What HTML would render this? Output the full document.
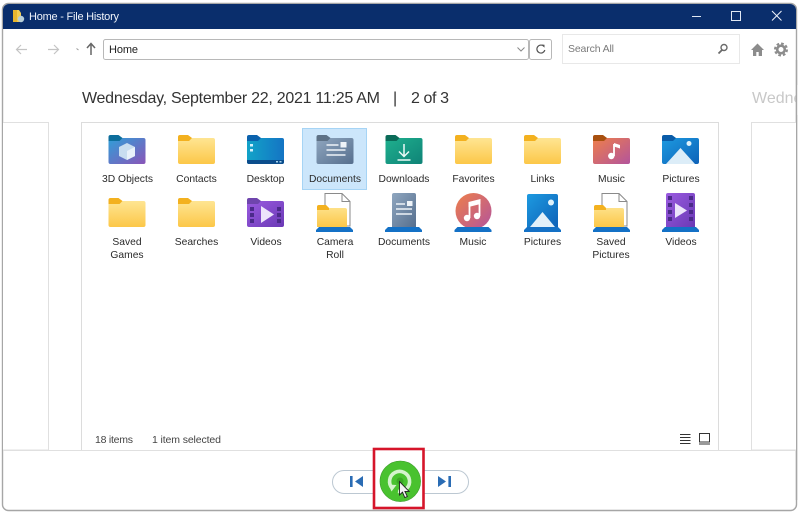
<!DOCTYPE html>
<html><head><meta charset="utf-8"><title>Home - File History</title>
<style>
html,body{margin:0;padding:0;background:#fff;width:800px;height:513px;overflow:hidden}
svg{display:block}
text{font-family:"Liberation Sans",sans-serif}
.l{font-size:10.3px;fill:#2a2a2a;text-anchor:middle}
</style></head><body>
<svg width="800" height="513" viewBox="0 0 800 513" xmlns="http://www.w3.org/2000/svg">
<defs>
<linearGradient id="gy" x1="0" y1="0" x2="0" y2="1"><stop offset="0" stop-color="#fee592"/><stop offset="1" stop-color="#fcc748"/></linearGradient>
<linearGradient id="g3d" x1="0" y1="0" x2="1" y2="1"><stop offset="0" stop-color="#2f9fd8"/><stop offset="1" stop-color="#8a55b8"/></linearGradient>
<linearGradient id="gdk" x1="0" y1="0" x2="1" y2="0"><stop offset="0" stop-color="#12a3c8"/><stop offset="1" stop-color="#1474c4"/></linearGradient>
<linearGradient id="gdoc" x1="0" y1="0" x2="1" y2="1"><stop offset="0" stop-color="#8fa6bf"/><stop offset="1" stop-color="#566f8e"/></linearGradient>
<linearGradient id="gdl" x1="0" y1="0" x2="1" y2="1"><stop offset="0" stop-color="#1fb08e"/><stop offset="1" stop-color="#0f8377"/></linearGradient>
<linearGradient id="gmu" x1="0" y1="0" x2="1" y2="1"><stop offset="0" stop-color="#ee7f4a"/><stop offset="1" stop-color="#b3549c"/></linearGradient>
<linearGradient id="gpi" x1="0" y1="0" x2="1" y2="1"><stop offset="0" stop-color="#1d9ae0"/><stop offset="1" stop-color="#0e62b8"/></linearGradient>
<linearGradient id="gvi" x1="0" y1="0" x2="1" y2="1"><stop offset="0" stop-color="#9a5be0"/><stop offset="1" stop-color="#6a39b5"/></linearGradient>

<g id="fy"><path d="M0 2a2 2 0 0 1 2-2h8l4 3h-14z M0 3h14v3h-14z" fill="#f3b11f"/><path d="M0 6a2 2 0 0 1 0 0V27a2 2 0 0 0 2 2h33a2 2 0 0 0 2-2V5a2 2 0 0 0-2-2H14l-3 3z" fill="url(#gy)"/></g>
<g id="shelf"><path d="M3 0H34L37 3V5H0V3z" fill="#1471c6"/></g>
</defs>

<!-- window -->
<rect x="2.500" y="3.500" width="794" height="507" rx="6" fill="#fff" stroke="#a6a6a6" stroke-width="1.400"/>
<path d="M3 29V10a6 6 0 0 1 6-6H790a6 6 0 0 1 6 6V29z" fill="#0a2e6c"/>

<!-- title -->
<path d="M13 10h6l2 3v9h-8z" fill="#f3cd52"/><path d="M13 10h4v12h-4z" fill="#e8b62e"/>
<circle cx="21" cy="19" r="3.200" fill="#b8cfd8"/>
<text x="29" y="20" font-size="11" fill="#eef3fa" textLength="90">Home - File History</text>
<path d="M692 16.500h9" stroke="#dfe7f3" stroke-width="1"/>
<rect x="731.500" y="11.500" width="9" height="9" fill="none" stroke="#dfe7f3" stroke-width="1"/>
<path d="M772 11l9.500 9.500M781.500 11l-9.500 9.500" stroke="#eef3fa" stroke-width="1"/>

<!-- nav -->
<path d="M27 49.500H17M21 45l-4.500 4.500L21 54" fill="none" stroke="#c4c4c4" stroke-width="1.200"/>
<path d="M48 49.500H58M54 45l4.500 4.500L54 54" fill="none" stroke="#c4c4c4" stroke-width="1.200"/>
<path d="M76.500 48.500l2 1.500" stroke="#999" stroke-width="1"/>
<path d="M91 55V44M87 48l4-4.500 4 4.500" fill="none" stroke="#666" stroke-width="1.500"/>
<rect x="103.500" y="39.500" width="425" height="20" rx="2" fill="#fff" stroke="#b8b8b8"/>
<text x="109" y="53" font-size="11" fill="#222" textLength="29">Home</text>
<path d="M517.500 47.500l3.500 3.500 3.500-3.500" fill="none" stroke="#888" stroke-width="1"/>
<rect x="529.500" y="39.500" width="22" height="20" rx="2" fill="#fff" stroke="#b8b8b8"/>
<path d="M544 46.500a4 4 0 1 0 .8 3.500" fill="none" stroke="#555" stroke-width="1.200"/><path d="M541.500 44.500l3 .3v3z" fill="#555"/>
<rect x="562.500" y="34.500" width="177" height="29" fill="#fff" stroke="#e8e8e8"/>
<text x="568" y="52" font-size="10.500" fill="#7a7a7a" textLength="46">Search All</text>
<circle cx="724" cy="47.500" r="3" fill="none" stroke="#6a6a6a" stroke-width="1.400"/><path d="M722 50l-3.500 3.500" stroke="#6a6a6a" stroke-width="1.800"/>
<path d="M751 50l6.500-6.500 6.500 6.500h-2v6h-3.300v-4h-2.400v4h-3.300v-6z" fill="#8c8c8c"/>
<circle cx="781" cy="49.500" r="6" fill="none" stroke="#8c8c8c" stroke-width="2" stroke-dasharray="2.700 2"/>
<circle cx="781" cy="49.500" r="3.800" fill="none" stroke="#8c8c8c" stroke-width="2.600"/>

<!-- date -->
<text x="82" y="103" font-size="16" fill="#333" textLength="298">Wednesday, September 22, 2021 11:25 AM</text>
<text x="393" y="103" font-size="16" fill="#333">|</text>
<text x="411" y="103" font-size="16" fill="#333" textLength="38">2 of 3</text>
<text x="752" y="103" font-size="16" fill="#c8c8c8">Wedne</text>
<rect x="796" y="85" width="4" height="30" fill="#fff"/>
<path d="M796.500 60V500" stroke="#a6a6a6" stroke-width="1.400"/>

<!-- panels -->
<path d="M3 122.500H48.500V450H3" fill="#fff" stroke="#e0e0e0"/>
<rect x="81.500" y="122.500" width="637" height="328" fill="#fff" stroke="#dcdcdc"/>
<path d="M796 122.500H751.500V450H796" fill="#fff" stroke="#e0e0e0"/>
<path d="M3 450.500H373M425 450.500H796" stroke="#e0e0e0"/>

<!-- selection -->
<rect x="302.500" y="128.500" width="64" height="61" fill="#cce6fb" stroke="#a6d4f5"/>

<!-- row 1 icons -->
<g transform="translate(108.500,135)">
<path d="M0 2a2 2 0 0 1 2-2h8l4 3v4H0z" fill="#0d6e9c"/>
<path d="M0 6V27a2 2 0 0 0 2 2h33a2 2 0 0 0 2-2V5a2 2 0 0 0-2-2H14l-3 3z" fill="url(#g3d)"/>
<path d="M18.500 8l8 4v9l-8 4-8-4v-9z" fill="#c9def0"/><path d="M18.500 16v9l8-4v-9z" fill="#e9f2fa"/>
</g>
<use href="#fy" x="178" y="135"/>
<g transform="translate(247,135)">
<path d="M0 2a2 2 0 0 1 2-2h8l4 3v4H0z" fill="#0b62ad"/>
<path d="M0 6V27a2 2 0 0 0 2 2h33a2 2 0 0 0 2-2V5a2 2 0 0 0-2-2H14l-3 3z" fill="url(#gdk)"/>
<path d="M0 25h37v2a2 2 0 0 1-2 2H2a2 2 0 0 1-2-2z" fill="#0b4d8c"/>
<rect x="3" y="9" width="3" height="2.500" fill="#d4f0fb"/><rect x="3" y="14" width="3" height="2.500" fill="#d4f0fb"/>
<rect x="29" y="26" width="2" height="1.500" fill="#a8d4ee"/><rect x="32.500" y="26" width="2" height="1.500" fill="#a8d4ee"/>
</g>
<g transform="translate(316.500,135)">
<path d="M0 2a2 2 0 0 1 2-2h8l4 3v4H0z" fill="#5d7186"/>
<path d="M0 6V27a2 2 0 0 0 2 2h33a2 2 0 0 0 2-2V5a2 2 0 0 0-2-2H14l-3 3z" fill="url(#gdoc)"/>
<path d="M10 10h12M10 15h19M10 20h19" stroke="#eef3f8" stroke-width="1.500"/><rect x="24" y="7" width="6" height="5.500" fill="#eef3f8"/>
</g>
<g transform="translate(385.500,135)">
<path d="M0 2a2 2 0 0 1 2-2h8l4 3v4H0z" fill="#0a6b58"/>
<path d="M0 6V27a2 2 0 0 0 2 2h33a2 2 0 0 0 2-2V5a2 2 0 0 0-2-2H14l-3 3z" fill="url(#gdl)"/>
<path d="M18.500 9v12M13.500 16.500l5 5 5-5M12 25h13" fill="none" stroke="#eafaf6" stroke-width="1.500"/>
</g>
<use href="#fy" x="455" y="135"/>
<use href="#fy" x="524" y="135"/>
<g transform="translate(593,135)">
<path d="M0 2a2 2 0 0 1 2-2h8l4 3v4H0z" fill="#a8500f"/>
<path d="M0 6V27a2 2 0 0 0 2 2h33a2 2 0 0 0 2-2V5a2 2 0 0 0-2-2H14l-3 3z" fill="url(#gmu)"/>
<path d="M21 9v12" stroke="#fff" stroke-width="1.800"/><path d="M21 8l6 2v3.500l-6-2z" fill="#fff"/><circle cx="18.300" cy="21" r="3.200" fill="#fff"/>
</g>
<g transform="translate(662,135)">
<path d="M0 2a2 2 0 0 1 2-2h8l4 3v4H0z" fill="#0a5ca8"/>
<path d="M0 6V27a2 2 0 0 0 2 2h33a2 2 0 0 0 2-2V5a2 2 0 0 0-2-2H14l-3 3z" fill="url(#gpi)"/>
<path d="M4 29L18.500 13L33 29z" fill="#dcedf8"/><circle cx="27" cy="8.500" r="2.500" fill="#dff2fb"/>
</g>

<!-- row 1 labels -->
<text class="l" x="127.500" y="182">3D Objects</text>
<text class="l" x="196.500" y="182">Contacts</text>
<text class="l" x="265.500" y="182">Desktop</text>
<text class="l" x="335" y="182">Documents</text>
<text class="l" x="404" y="182">Downloads</text>
<text class="l" x="473.500" y="182">Favorites</text>
<text class="l" x="542.500" y="182">Links</text>
<text class="l" x="611.500" y="182">Music</text>
<text class="l" x="681" y="182">Pictures</text>

<!-- row 2 icons -->
<use href="#fy" x="108.500" y="198"/>
<use href="#fy" x="178" y="198"/>
<g transform="translate(247,198)">
<path d="M0 2a2 2 0 0 1 2-2h8l4 3v4H0z" fill="#6f45ad"/>
<path d="M0 6V27a2 2 0 0 0 2 2h33a2 2 0 0 0 2-2V5a2 2 0 0 0-2-2H14l-3 3z" fill="url(#gvi)"/>
<path d="M3 9h4v4H3zM3 15h4v4H3zM3 21h4v4H3zM30 9h4v4h-4zM30 15h4v4h-4zM30 21h4v4h-4z" fill="#4b2a8a"/>
<path d="M14 8l13 8.500-13 8.500z" fill="#ece4fb"/>
</g>

<!-- Camera Roll -->
<g transform="translate(316,193)">
<path d="M9 .5H26l8 8V33H9z" fill="#fff" stroke="#8a8a8a"/><path d="M26 .5v8h8" fill="none" stroke="#8a8a8a"/>
<path d="M1 14a2 2 0 0 1 2-2h7l3 3h16a2 2 0 0 1 2 2V34H1z" fill="url(#gy)"/><path d="M1 14a2 2 0 0 1 2-2h7l3 3v2H1z" fill="#f3b11f"/>
<use href="#shelf" y="34"/>
</g>
<!-- Documents lib -->
<g transform="translate(385,193)">
<path d="M7 2a2 2 0 0 1 2-2H29a2 2 0 0 1 2 2V34H7z" fill="url(#gdoc)"/>
<path d="M11 11h9M11 16h16M11 21h16" stroke="#eef3f8" stroke-width="1.500"/><rect x="22" y="8" width="5.500" height="5" fill="#eef3f8"/>
<use href="#shelf" y="34"/>
</g>
<!-- Music lib -->
<g transform="translate(454.500,193)">
<circle cx="19" cy="18" r="18" fill="url(#gmu)"/>
<path d="M15 11v14M25 9v14" stroke="#fff" stroke-width="1.800"/><path d="M14 9l12-3v5l-12 3z" fill="#fff"/><circle cx="12.500" cy="25" r="3.200" fill="#fff"/><circle cx="22.500" cy="23" r="3.200" fill="#fff"/>
<use href="#shelf" y="34"/>
</g>
<!-- Pictures lib -->
<g transform="translate(524,193)">
<path d="M3 3a2 2 0 0 1 2-2H32a2 2 0 0 1 2 2V34H3z" fill="url(#gpi)"/>
<path d="M6 34L18.500 19L31 34z" fill="#e2f0f9"/><circle cx="27" cy="9.500" r="3" fill="#dff2fb"/>
<use href="#shelf" y="34"/>
</g>
<!-- Saved Pictures -->
<g transform="translate(593,193)">
<path d="M9 .5H26l8 8V33H9z" fill="#fff" stroke="#8a8a8a"/><path d="M26 .5v8h8" fill="none" stroke="#8a8a8a"/>
<path d="M1 14a2 2 0 0 1 2-2h7l3 3h16a2 2 0 0 1 2 2V34H1z" fill="url(#gy)"/><path d="M1 14a2 2 0 0 1 2-2h7l3 3v2H1z" fill="#f3b11f"/>
<use href="#shelf" y="34"/>
</g>
<!-- Videos lib -->
<g transform="translate(662,193)">
<path d="M4 2a2 2 0 0 1 2-2H31a2 2 0 0 1 2 2V34H4z" fill="url(#gvi)"/>
<path d="M6 3h4v4H6zM6 10h4v4H6zM6 17h4v4H6zM6 24h4v4H6zM27 3h4v4h-4zM27 10h4v4h-4zM27 17h4v4h-4zM27 24h4v4h-4z" fill="#4b2a8a"/>
<path d="M13 10l12 7.500-12 7.500z" fill="#ece4fb"/>
<use href="#shelf" y="34"/>
</g>

<!-- row 2 labels -->
<text class="l" x="127" y="245">Saved</text><text class="l" x="127" y="258">Games</text>
<text class="l" x="196.500" y="245">Searches</text>
<text class="l" x="266" y="245">Videos</text>
<text class="l" x="335" y="245">Camera</text><text class="l" x="335" y="258">Roll</text>
<text class="l" x="404" y="245">Documents</text>
<text class="l" x="473" y="245">Music</text>
<text class="l" x="542.500" y="245">Pictures</text>
<text class="l" x="611" y="245">Saved</text><text class="l" x="611" y="258">Pictures</text>
<text class="l" x="681" y="245">Videos</text>

<!-- status -->
<text x="95" y="443" font-size="10.500" fill="#444" textLength="38">18 items</text>
<text x="152" y="443" font-size="10.500" fill="#444" textLength="69">1 item selected</text>
<path d="M680 434.500h10.500M680 437.500h10.500M680 440.500h10.500M680 443.500h10.500" stroke="#333" stroke-width="1"/>
<rect x="699.500" y="433.500" width="10" height="8.500" fill="none" stroke="#333"/><path d="M699 444h11" stroke="#333"/>

<!-- playback -->
<rect x="332.500" y="470.500" width="136" height="23" rx="11.500" fill="#fff" stroke="#bcc8d2"/>
<path d="M350 476h2.600v11H350zM363 476v11l-8-5.500z" fill="#2a6cb4"/>
<path d="M438 476v11l8-5.500zM448.400 476h2.600v11h-2.600z" fill="#2a6cb4"/>
<rect x="374" y="449" width="49.500" height="59" fill="#fff" stroke="#d6152a" stroke-width="2.600"/>
<circle cx="400.300" cy="481.300" r="20.300" fill="#49c22f" stroke="#3a9a28" stroke-width=".6"/>
<path d="M392.500 488.500a10 10 0 1 1 5.500 2.800" fill="none" stroke="#d4f3cc" stroke-width="3.600"/>
<path d="M388.500 484.500l8 .5-5 6.500z" fill="#d4f3cc"/>
<circle cx="400" cy="481" r="3.500" fill="#3aa824"/>
<path d="M399.500 481.500v13.500l3-2.800 2.300 5.300 2.500-1-2.400-5.100h4.200z" fill="#f4f4f4" stroke="#222" stroke-width=".9"/>
</svg>
</body></html>
